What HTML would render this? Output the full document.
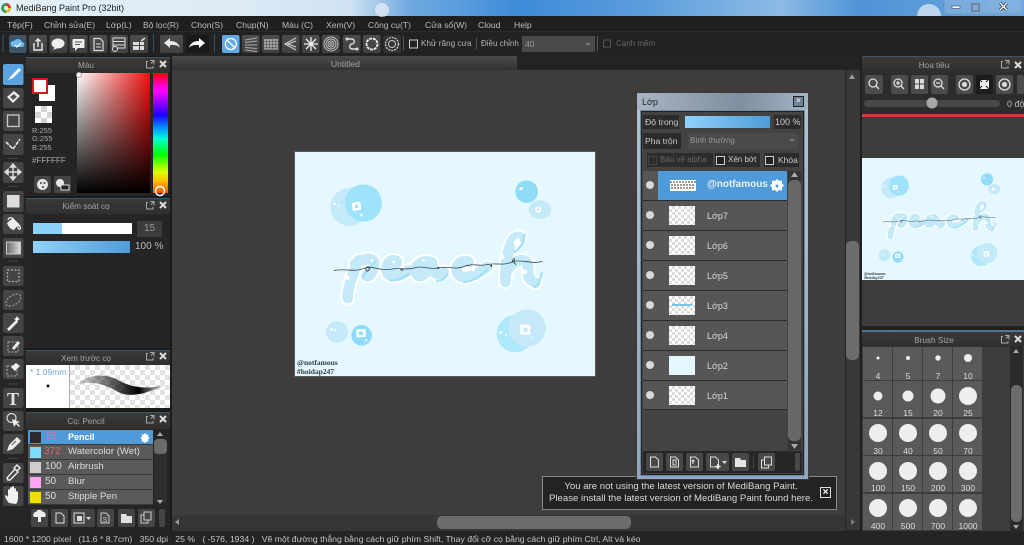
<!DOCTYPE html>
<html><head><meta charset="utf-8"><title>MediBang Paint Pro</title>
<style>
html,body{margin:0;padding:0;background:#3f3d3c}
#r{position:relative;width:1024px;height:545px;overflow:hidden;background:#3f3d3c;font-family:"Liberation Sans",sans-serif;font-size:10px;color:#bdbdbd;filter:blur(.35px)}
#r div{position:absolute;box-sizing:border-box}
.t{white-space:pre;line-height:12px}
.m{top:19px;font-size:8.6px}
.h{background:linear-gradient(#3c3a39,#302f2e);border-top:1px solid #3e5566;text-align:center;color:#a5a5a5;font-size:8.2px;line-height:15px}
.p{background:#252525}
.row{background:#5a5a5a;border-bottom:1px solid #3a3a3a}
.lr{left:643px;width:144px;height:30px;background:#565656;border-bottom:1px solid #2c2c2c}
.th{left:669px;width:26px;height:19px;background:repeating-conic-gradient(#dcdcdc 0 25%,#fff 0 50%) 0 0/6px 6px}
.rd{left:646px;width:8px;height:8px;border-radius:50%;background:#d8d8d8}
.nm{left:707px;color:#d8d8d8;font-size:9px}
.cb{width:9px;height:9px;border:1px solid #cfcfcf;background:#222}
#r .lb{font-size:8.5px;color:#ddd;text-align:center;width:30px;z-index:2;line-height:12px}
.br{font-size:9.6px;color:#ddd}
svg{position:absolute;left:0;top:0}
</style></head><body><div id="r">

<div style="left:0;top:0;width:1024px;height:16px;background:linear-gradient(90deg,#e4f0f8 0,#dbeaf5 250px,#cfe2f2 350px,#6fa9e0 410px,#3f8bd8 520px,#5a9cdc 640px,#8cbbe5 780px,#4f93d6 860px,#6ea6de 1024px)"></div>
<div class="t" style="left:16px;top:2px;color:#222;font-size:9px">MediBang Paint Pro (32bit)</div>

<div style="left:0;top:16px;width:1024px;height:16px;background:#1f1f1f;border-bottom:1px solid #2c2c2c"></div>
<div class="t m" style="left:7px">Tệp(F)</div>
<div class="t m" style="left:44px">Chỉnh sửa(E)</div>
<div class="t m" style="left:106px">Lớp(L)</div>
<div class="t m" style="left:143px">Bộ lọc(R)</div>
<div class="t m" style="left:191px">Chọn(S)</div>
<div class="t m" style="left:236px">Chụp(N)</div>
<div class="t m" style="left:282px">Màu (C)</div>
<div class="t m" style="left:326px">Xem(V)</div>
<div class="t m" style="left:368px">Công cụ(T)</div>
<div class="t m" style="left:425px">Cửa sổ(W)</div>
<div class="t m" style="left:478px">Cloud</div>
<div class="t m" style="left:514px">Help</div>

<div style="left:0;top:32px;width:1024px;height:23px;background:#222"></div>
<div class="t" style="left:421px;top:38px;font-size:8.2px;color:#b5b5b5">Khử răng cưa</div>
<div class="t" style="left:481px;top:38px;font-size:8px;color:#b5b5b5">Điều chỉnh</div>
<div style="left:522px;top:36px;width:73px;height:16px;background:#4a4a4a"></div>
<div class="t" style="left:525px;top:38px;font-size:8.5px;color:#9a9a9a">40</div>
<div class="t" style="left:616px;top:38px;font-size:8px;color:#666">Cạnh mềm</div>

<div style="left:0;top:55px;width:1024px;height:15px;background:#232323"></div>
<div style="left:172px;top:56px;width:345px;height:14px;background:linear-gradient(#4d4b4a,#333231)"></div>
<div class="t" style="left:331px;top:58px;font-size:8.5px;color:#a5a5a5">Untitled</div>
<div style="left:0;top:55px;width:26px;height:476px;background:#262626"></div>

<div style="left:26px;top:56px;width:146px;height:475px;background:#1b1b1b"></div>
<div class="h" style="left:26px;top:57px;width:144px;height:16px;padding-right:24px">Màu</div>
<div class="p" style="left:26px;top:73px;width:144px;height:123px"></div>
<div style="left:77px;top:73px;width:73px;height:120px;background:linear-gradient(transparent,#000),linear-gradient(90deg,#fff,#f01010)"></div>
<div style="left:153px;top:73px;width:15px;height:120px;background:linear-gradient(#f00000 0,#ff00c8 10%,#ff00ff 15%,#2000ff 35%,#00a0ff 47%,#00ffd0 55%,#00ff00 68%,#d8ff00 82%,#ffc000 90%,#ff5000 100%)"></div>
<div style="left:39px;top:85px;width:16px;height:16px;background:#fff"></div>
<div style="left:32px;top:78px;width:16px;height:16px;background:#fff;border:2px solid #d81818"></div>
<div style="left:35px;top:106px;width:17px;height:17px;background:repeating-conic-gradient(#d4d4d4 0 25%,#fff 0 50%) 0 0/12px 12px"></div>
<div class="t" style="left:32px;top:127px;font-size:7.5px;line-height:8.3px;color:#aaa">R:255
G:255
B:255</div>
<div class="t" style="left:32px;top:155px;font-size:8px;color:#aaa">#FFFFFF</div>

<div class="h" style="left:26px;top:198px;width:144px;height:16px;padding-right:24px">Kiểm soát cọ</div>
<div class="p" style="left:26px;top:214px;width:144px;height:134px"></div>
<div style="left:33px;top:223px;width:99px;height:11px;background:linear-gradient(90deg,#8dd0fb 0,#8dd0fb 29px,#fff 29px)"></div>
<div style="left:137px;top:221px;width:25px;height:16px;background:#3c3c3c;color:#999;text-align:center;font-size:10px;line-height:16px">15</div>
<div style="left:33px;top:241px;width:97px;height:12px;background:linear-gradient(90deg,#90d2fb,#4f9cd8)"></div>
<div class="t" style="left:135px;top:241px;font-size:10px;color:#bbb">100 %</div>

<div class="h" style="left:26px;top:350px;width:144px;height:15px;padding-right:24px">Xem trước cọ</div>
<div style="left:26px;top:365px;width:44px;height:43px;background:#fff;border-right:1px solid #aaa"></div>
<div style="left:70px;top:365px;width:100px;height:43px;background:repeating-conic-gradient(#e2e2e2 0 25%,#fff 0 50%) 0 0/10px 10px"></div>
<div class="t" style="left:30px;top:366px;font-size:8.5px;color:#6aa3cf">* 1.09mm</div>

<div class="h" style="left:26px;top:412px;width:144px;height:17px;line-height:17px;padding-right:24px">Cọ: Pencil</div>
<div class="p" style="left:26px;top:429px;width:144px;height:102px"></div>
<div class="row" style="left:28px;top:430px;width:125px;height:15px;background:#4f9bd9"></div>
<div class="row" style="left:28px;top:445px;width:125px;height:15px"></div>
<div class="row" style="left:28px;top:460px;width:125px;height:15px"></div>
<div class="row" style="left:28px;top:475px;width:125px;height:15px"></div>
<div class="row" style="left:28px;top:490px;width:125px;height:15px"></div>
<div style="left:30px;top:432px;width:11px;height:11px;background:#2a2a2e"></div>
<div style="left:30px;top:447px;width:11px;height:11px;background:#7fdcff"></div>
<div style="left:30px;top:462px;width:11px;height:11px;background:#d0ccd0"></div>
<div style="left:30px;top:477px;width:11px;height:11px;background:#ffa4f4"></div>
<div style="left:30px;top:492px;width:11px;height:11px;background:#f0e000"></div>
<div class="t" style="left:45px;top:431px;font-size:10px;color:#d87a9a">15</div>
<div class="t" style="left:44px;top:446px;font-size:10px;color:#d86a6a">372</div>
<div class="t" style="left:45px;top:461px;font-size:10px;color:#ddd">100</div>
<div class="t" style="left:45px;top:476px;font-size:10px;color:#ddd">50</div>
<div class="t" style="left:45px;top:491px;font-size:10px;color:#ddd">50</div>
<div class="t" style="left:68px;top:431px;font-size:9px;color:#fff;font-weight:bold">Pencil</div>
<div class="t br" style="left:68px;top:446px">Watercolor (Wet)</div>
<div class="t br" style="left:68px;top:461px">Airbrush</div>
<div class="t br" style="left:68px;top:476px">Blur</div>
<div class="t br" style="left:68px;top:491px">Stipple Pen</div>
<div style="left:154px;top:438px;width:13px;height:66px;background:#2e2e2e;border-radius:5px"></div>
<div style="left:154px;top:439px;width:13px;height:15px;background:#6a6a6a;border-radius:4px"></div>

<div style="left:845px;top:70px;width:17px;height:461px;background:#252525"></div>
<div style="left:846px;top:70px;width:14px;height:460px;background:#3a3837"></div>
<div style="left:846px;top:241px;width:13px;height:119px;background:#6e6c6b;border-radius:5px"></div>
<div style="left:172px;top:515px;width:673px;height:16px;background:#383635"></div>
<div style="left:437px;top:516px;width:194px;height:13px;background:#6e6c6b;border-radius:5px"></div>

<div style="left:295px;top:152px;width:300px;height:224px;background:#e6f8ff;box-shadow:0 0 0 1px #5a5a5a"></div>

<div style="left:862px;top:56px;width:162px;height:475px;background:#3f3d3c"></div>
<div style="left:860px;top:56px;width:2px;height:475px;background:#1f1f1f"></div>
<div class="h" style="left:862px;top:56px;width:162px;height:17px;line-height:17px;padding-right:18px">Hoa tiêu</div>
<div style="left:862px;top:73px;width:162px;height:41px;background:#2c2c2c"></div>
<div style="left:864px;top:100px;width:136px;height:7px;background:#484848;border-radius:4px"></div>
<div class="t" style="left:1007px;top:98px;font-size:9px;color:#bbb">0 độ</div>
<div style="left:862px;top:114px;width:162px;height:3px;background:#c8403a"></div>
<div style="left:862px;top:158px;width:162px;height:122px;background:#e6f8ff"></div>
<div style="left:862px;top:326px;width:162px;height:5px;background:#1f1f1f"></div>

<div class="h" style="left:862px;top:330px;width:162px;height:17px;line-height:17px;padding-right:18px;border-top:2px solid #4a7896">Brush Size</div>
<div style="left:1010px;top:347px;width:13px;height:184px;background:#2a2a2a"></div>
<div style="left:1011px;top:385px;width:11px;height:137px;background:#6e6c6b;border-radius:5px"></div>

<div class="lb" style="left:863px;top:370px">4</div><div class="lb" style="left:893px;top:370px">5</div><div class="lb" style="left:923px;top:370px">7</div><div class="lb" style="left:953px;top:370px">10</div>
<div class="lb" style="left:863px;top:407px">12</div><div class="lb" style="left:893px;top:407px">15</div><div class="lb" style="left:923px;top:407px">20</div><div class="lb" style="left:953px;top:407px">25</div>
<div class="lb" style="left:863px;top:445px">30</div><div class="lb" style="left:893px;top:445px">40</div><div class="lb" style="left:923px;top:445px">50</div><div class="lb" style="left:953px;top:445px">70</div>
<div class="lb" style="left:863px;top:482px">100</div><div class="lb" style="left:893px;top:482px">150</div><div class="lb" style="left:923px;top:482px">200</div><div class="lb" style="left:953px;top:482px">300</div>
<div class="lb" style="left:863px;top:520px">400</div><div class="lb" style="left:893px;top:520px">500</div><div class="lb" style="left:923px;top:520px">700</div><div class="lb" style="left:953px;top:520px">1000</div>

<div style="left:0;top:531px;width:1024px;height:14px;background:#242424"></div>
<div class="t" style="left:4px;top:533px;font-size:8.7px;color:#c4c4c4">1600 * 1200 pixel   (11.6 * 8.7cm)   350 dpi   25 %   ( -576, 1934 )   Vẽ một đường thẳng bằng cách giữ phím Shift, Thay đổi cỡ cọ bằng cách giữ phím Ctrl, Alt và kéo</div>

<div style="left:542px;top:476px;width:295px;height:34px;background:#232323;border:1px solid #8a8a8a"></div>
<div class="t" style="left:545px;top:481px;width:272px;text-align:center;font-size:9.6px;color:#d8d8d8">You are not using the latest version of MediBang Paint.
Please install the latest version of MediBang Paint found here.</div>
<div style="left:820px;top:487px;width:11px;height:11px;background:#222;border:1px solid #ddd;color:#fff;font-size:10px;font-weight:bold;line-height:9px;text-align:center">×</div>

<div style="left:636px;top:92px;width:173px;height:388px;background:linear-gradient(#b4c2d0,#8ea6c0);border:1px solid #3a3a3a"></div>
<div style="left:637px;top:93px;width:171px;height:17px;background:linear-gradient(90deg,#a9b5c2,#7f8f9f 60%,#a3b4c4)"></div>
<div class="t" style="left:642px;top:96px;font-size:9px;color:#222">Lớp</div>
<div style="left:793px;top:96px;width:11px;height:11px;background:#6f8396;border:1px solid #222;color:#fff;font-size:8px;line-height:8px;text-align:center">×</div>
<div style="left:640px;top:110px;width:165px;height:366px;background:#6e8ba8"></div>
<div style="left:641px;top:111px;width:163px;height:364px;background:#454342;border:1px solid #222"></div>
<div style="left:643px;top:115px;width:36px;height:14px;background:#2c2c2c"></div>
<div class="t" style="left:645px;top:116px;font-size:8.7px;color:#c8c8c8">Độ trong</div>
<div style="left:685px;top:116px;width:85px;height:12px;background:linear-gradient(90deg,#8fd2fb,#4f9cd8)"></div>
<div style="left:774px;top:115px;width:27px;height:14px;background:#2c2c2c"></div>
<div class="t" style="left:775px;top:116px;font-size:9px;color:#ccc">100 %</div>
<div style="left:643px;top:133px;width:38px;height:16px;background:#2c2a2a"></div>
<div class="t" style="left:645px;top:135px;font-size:8.6px;color:#c8c8c8">Pha trộn</div>
<div style="left:688px;top:133px;width:110px;height:16px;background:#4c4a49"></div>
<div class="t" style="left:690px;top:135px;font-size:8px;color:#999">Bình thường</div>
<div style="left:647px;top:153px;width:66px;height:14px;background:#2c2c2c"></div>
<div style="left:715px;top:153px;width:45px;height:14px;background:#2c2c2c"></div>
<div style="left:764px;top:153px;width:35px;height:14px;background:#2c2c2c"></div>
<div class="cb" style="left:648px;top:156px;border-color:#444;background:#2c2c2c"></div>
<div class="cb" style="left:716px;top:156px"></div>
<div class="cb" style="left:765px;top:156px"></div>
<div class="t" style="left:660px;top:154px;font-size:8px;color:#666">Bảo vệ alpha</div>
<div class="t" style="left:728px;top:154px;font-size:8px;color:#ccc">Xén bớt</div>
<div class="t" style="left:778px;top:154px;font-size:8.5px;color:#ccc">Khóa</div>

<div class="lr" style="top:171px"></div><div style="left:658px;top:171px;width:129px;height:29px;background:#4f9bd9"></div>
<div class="lr" style="top:201px"></div><div class="lr" style="top:231px"></div><div class="lr" style="top:261px"></div>
<div class="lr" style="top:291px"></div><div class="lr" style="top:321px"></div><div class="lr" style="top:351px"></div><div class="lr" style="top:381px;height:29px"></div>
<div class="rd" style="top:181px"></div><div class="rd" style="top:211px"></div><div class="rd" style="top:241px"></div><div class="rd" style="top:271px"></div><div class="rd" style="top:301px"></div><div class="rd" style="top:331px"></div><div class="rd" style="top:361px"></div><div class="rd" style="top:391px"></div>
<div class="th" style="top:206px"></div><div class="th" style="top:236px"></div><div class="th" style="top:266px"></div><div class="th" style="top:296px"></div><div class="th" style="top:326px"></div><div class="th" style="top:356px;background:#e6f8ff"></div><div class="th" style="top:386px"></div>
<div class="t" style="left:707px;top:179px;font-size:10px;font-weight:bold;color:#e8f2fa">@notfamous</div>
<div class="t nm" style="top:210px">Lớp7</div>
<div class="t nm" style="top:240px">Lớp6</div>
<div class="t nm" style="top:270px">Lớp5</div>
<div class="t nm" style="top:300px">Lớp3</div>
<div class="t nm" style="top:330px">Lớp4</div>
<div class="t nm" style="top:360px">Lớp2</div>
<div class="t nm" style="top:390px">Lớp1</div>
<div style="left:788px;top:171px;width:13px;height:279px;background:#333"></div>
<div style="left:788px;top:180px;width:13px;height:261px;background:#6a6867;border-radius:5px"></div>
<div style="left:643px;top:451px;width:159px;height:22px;background:#262626"></div>

<svg width="1024" height="545" viewBox="0 0 1024 545">
<defs>
<symbol id="art" viewBox="0 0 300 224" overflow="visible">
<g transform="translate(-4.67,-6.67) scale(.3333)">
<circle cx="177" cy="185" r="57" fill="#c4eafa"/><circle cx="219" cy="173" r="56" fill="#9fe3fb"/>
<rect x="186" y="171" width="26" height="24" rx="3" fill="#fff" transform="rotate(-10 199 183)"/><rect x="194" y="178" width="10" height="10" fill="#9fe3fb"/>
<circle cx="133" cy="175" r="4" fill="#fff"/><circle cx="146" cy="180" r="3" fill="#fff"/><circle cx="213" cy="209" r="4" fill="#fff"/>
<circle cx="709" cy="139" r="34" fill="#8fdcf9"/><circle cx="692" cy="130" r="5" fill="#fff"/><ellipse cx="749" cy="193" rx="34" ry="28" fill="#c4eafa"/><circle cx="744" cy="193" r="9" fill="#fff"/><circle cx="744" cy="193" r="4" fill="#c4eafa"/>
<circle cx="140" cy="560" r="33" fill="#c4eafa"/><circle cx="124" cy="552" r="4" fill="#fff"/><circle cx="134" cy="555" r="3" fill="#fff"/>
<circle cx="214" cy="570" r="31" fill="#8fdcf9"/><rect x="198" y="552" width="28" height="24" rx="3" fill="#fff"/><rect x="206" y="559" width="12" height="10" fill="#8fdcf9"/><circle cx="228" cy="584" r="3" fill="#fff"/>
<circle cx="675" cy="565" r="56" fill="#aee8fb"/><circle cx="710" cy="548" r="56" fill="#c4eafa"/>
<rect x="690" y="538" width="30" height="30" rx="3" fill="#fff"/><rect x="699" y="547" width="13" height="12" fill="#c4eafa"/><circle cx="631" cy="562" r="4" fill="#fff"/><circle cx="647" cy="568" r="3" fill="#fff"/><circle cx="725" cy="577" r="3" fill="#fff"/>
<g fill="none" stroke-linecap="round" stroke-linejoin="round">
<g stroke="#fff" stroke-width="44">
<path d="M205 345C188 385 172 425 172 458"/><path d="M195 355C235 330 262 340 248 372C240 395 228 395 228 390"/>
<path d="M290 372C315 365 330 345 310 345C285 345 280 390 305 392C325 394 340 385 355 375"/>
<path d="M420 350C390 340 365 370 382 390C395 400 415 375 425 352C424 375 432 395 460 380"/>
<path d="M535 350C505 338 485 375 510 393C530 402 555 390 590 365"/>
<path d="M688 275C655 270 645 350 645 410M645 385C670 340 705 335 712 358C718 385 705 400 735 412"/>
</g>
<g stroke="#c4e9f8" stroke-width="32">
<path d="M205 345C188 385 172 425 172 458"/><path d="M195 355C235 330 262 340 248 372C240 395 228 395 228 390"/>
<path d="M290 372C315 365 330 345 310 345C285 345 280 390 305 392C325 394 340 385 355 375"/>
<path d="M420 350C390 340 365 370 382 390C395 400 415 375 425 352C424 375 432 395 460 380"/>
<path d="M535 350C505 338 485 375 510 393C530 402 555 390 590 365"/>
<path d="M688 275C655 270 645 350 645 410M645 385C670 340 705 335 712 358C718 385 705 400 735 412"/>
</g>
<path d="M218 398C225 378 245 360 255 350M300 405C320 408 345 395 355 385M440 405C455 408 465 398 472 388M520 410C545 410 575 390 590 372M703 268C702 290 690 310 672 320M733 425C748 415 752 398 754 382" stroke="#9fdff7" stroke-width="6"/>
</g>
<g fill="#fff"><circle cx="172" cy="398" r="6"/><circle cx="310" cy="350" r="4"/><circle cx="400" cy="345" r="4"/><circle cx="548" cy="372" r="6"/><circle cx="637" cy="335" r="6"/><circle cx="703" cy="380" r="7"/><ellipse cx="680" cy="290" rx="8" ry="14" transform="rotate(30 680 290)"/><circle cx="245" cy="345" r="4"/><circle cx="480" cy="320" r="3"/></g>
<path d="M130 376C160 368 190 382 222 369C248 360 272 378 300 372C325 366 345 376 375 367C400 360 415 374 445 368C475 362 495 374 520 364C545 352 565 364 590 358C620 352 640 362 665 350C690 340 725 358 757 348" fill="none" stroke="#1f2a30" stroke-width="2"/>
<path d="M226 372c6-12 14-8 10 2c-3 6-9 4-10-2M330 374c6-8 10-2 4 3M440 368c6-6 8 0 4 2M600 362c4-6 6 0 2 3M665 352c4-16 10-16 6 0l6 6" fill="none" stroke="#1f2a30" stroke-width="2.4"/>
</g>
</symbol>
<linearGradient id="st" x1="0" x2="1"><stop offset="0" stop-color="#000" stop-opacity=".12"/><stop offset=".35" stop-color="#000" stop-opacity=".55"/><stop offset=".7" stop-color="#000"/><stop offset="1" stop-color="#000" stop-opacity=".1"/></linearGradient>
<linearGradient id="btn" x1="0" y1="0" x2="0" y2="1"><stop offset="0" stop-color="#4c4c4c"/><stop offset="1" stop-color="#404040"/></linearGradient>
<linearGradient id="sq" x1="0" x2="1"><stop offset="0" stop-color="#666"/><stop offset="1" stop-color="#ddd"/></linearGradient>
</defs>

<!-- title icon and controls -->
<circle cx="6" cy="8" r="5" fill="#2ea060"/><path d="M6 3a5 5 0 0 1 5 5H6z" fill="#e03a3a"/><path d="M6 8h5a5 5 0 0 1-5 5z" fill="#e8c020"/><circle cx="6" cy="8" r="2" fill="#fff"/>
<path d="M917 16a12 12 0 0 1 24 0z" fill="#dbe8f2" fill-opacity=".75"/>
<circle cx="382" cy="10" r="7" fill="#e8f0f6" fill-opacity=".7"/>
<g fill="none" stroke="#7fa9d0"><rect x="945" y="-1" width="22" height="14" rx="2" fill="#9fc4e6" fill-opacity=".4"/><rect x="967" y="-1" width="19" height="14" fill="#9fc4e6" fill-opacity=".4"/><rect x="986" y="-1" width="35" height="14" rx="2" fill="#9fc4e6" fill-opacity=".4"/></g>
<rect x="952" y="6" width="8" height="2.5" fill="#fff" stroke="#345" stroke-width=".6"/>
<rect x="972" y="4" width="7" height="7" fill="none" stroke="#234" stroke-width="1.6"/><rect x="972" y="4" width="7" height="7" fill="none" stroke="#eef" stroke-width=".6"/>
<path d="M1000 3l7 7m0-7l-7 7" stroke="#234" stroke-width="3"/><path d="M1000 3l7 7m0-7l-7 7" stroke="#fff" stroke-width="1.4"/>

<!-- toolbar -->
<g stroke="#32526a" stroke-width="1"><path d="M3 34v18M153.500 34v18M214.500 34v18"/></g>
<path d="M403.500 36v15M476.500 38v11M597.500 36v15" stroke="#555"/>
<g fill="url(#btn)">
<rect x="9" y="35" width="17.500" height="18" rx="2" fill="#3e5468"/><rect x="29" y="35" width="18" height="18" rx="2"/><rect x="49.500" y="35" width="18" height="18" rx="2"/><rect x="69.500" y="35" width="18" height="18" rx="2"/><rect x="89.500" y="35" width="18" height="18" rx="2"/><rect x="110" y="35" width="18" height="18" rx="2"/><rect x="130" y="35" width="18" height="18" rx="2"/>
<rect x="160" y="35" width="23" height="18" rx="2"/><rect x="186" y="35" width="23" height="18" rx="2" fill="#1a1a1a"/>
<rect x="222" y="35" width="17.500" height="18" rx="2" fill="#5fa9e6"/><rect x="242" y="35" width="17.500" height="18" rx="2"/><rect x="262" y="35" width="17.500" height="18" rx="2"/><rect x="282" y="35" width="17.500" height="18" rx="2"/><rect x="302" y="35" width="17.500" height="18" rx="2"/><rect x="322" y="35" width="17.500" height="18" rx="2"/><rect x="343" y="35" width="17.500" height="18" rx="2"/><rect x="363" y="35" width="17.500" height="18" rx="2"/><rect x="383.500" y="35" width="17.500" height="18" rx="2" fill="#333"/>
</g>
<path d="M13 47a3 3 0 0 1 1-6a4.500 4.500 0 0 1 8 1a2.500 2.500 0 0 1 0 5z" fill="#6db8ef"/><path d="M15 45l2 2 4-4" stroke="#fff" fill="none" stroke-width="1.200"/>
<path d="M34 43v7h8v-7M38 47v-8m-2.500 2.500L38 39l2.500 2.500" fill="none" stroke="#eee" stroke-width="1.400"/>
<ellipse cx="58" cy="43.500" rx="6.500" ry="5" fill="#eee"/><path d="M55 47l-2 3 5-2z" fill="#eee"/>
<rect x="72.500" y="39" width="12" height="9" rx="1" fill="#eee"/><path d="M75 42h7M75 44.500h5" stroke="#555"/><path d="M75 48v3l3-3z" fill="#eee"/>
<path d="M94 38.500h6l3 3v9h-9z" fill="none" stroke="#ddd" stroke-width="1.200"/><path d="M96 44h5M96 47h5" stroke="#ddd"/>
<rect x="113" y="38" width="12" height="10" fill="none" stroke="#ddd"/><path d="M113 41.500h12M113 45h12" stroke="#ddd"/><circle cx="115" cy="49" r="2.500" fill="#444" stroke="#ddd"/>
<path d="M133 42h6v3h-6zM140 42h4v3h-4zM133 46h6v4h-6zM140 46h4v4h-4z" fill="#ddd"/><path d="M141 41l4-3" stroke="#ddd" stroke-width="1.500"/>
<path d="M164 43l6-5v3c5 0 9 2 10 7c-2-3-5-3-10-3v3z" fill="#e8e8e8"/>
<path d="M205 43l-6-5v3c-5 0-9 2-10 7c2-3 5-3 10-3v3z" fill="#fff"/>
<circle cx="230.800" cy="44" r="5.500" fill="none" stroke="#fff" stroke-width="1.300"/><path d="M227 40l8 8" stroke="#fff" stroke-width="1.300"/>
<path d="M245 40l12-2M245 42.500l12-1.500M245 45h12M245 47.500l12 1M245 50l12 1.500" stroke="#aaa" stroke-width="1.100"/>
<path d="M265 39v10M268 39v10M271 39v10M274 39v10M277 39v10M264 40h14M264 43h14M264 46h14M264 49h14" stroke="#bbb"/>
<path d="M296 38L285 44l11 6M296 41l-8 3 8 3" fill="none" stroke="#ccc" stroke-width="1.200"/>
<path d="M311 37v14M304 44h14M306 39l10 10M316 39l-10 10" stroke="#eee" stroke-width="1.300"/>
<g fill="none" stroke="#bbb"><circle cx="331" cy="44" r="7"/><circle cx="331" cy="44" r="5"/><circle cx="331" cy="44" r="3"/><circle cx="331" cy="44" r="1.200"/></g>
<path d="M347 39h5c3 0 3 5 0 5s-3 5 0 5h5" fill="none" stroke="#ddd" stroke-width="1.400"/><circle cx="347" cy="39" r="1.500" fill="#ddd"/><circle cx="357" cy="49" r="1.500" fill="#ddd"/>
<circle cx="372" cy="44" r="5.500" fill="none" stroke="#eee" stroke-width="1.800" stroke-dasharray="3 .8"/>
<circle cx="392" cy="44" r="6.500" fill="none" stroke="#ccc" stroke-width="1.300" stroke-dasharray="2 1"/><circle cx="392" cy="44" r="3.500" fill="none" stroke="#ccc"/>
<rect x="409.500" y="40" width="8" height="8" fill="none" stroke="#ccc"/>
<rect x="603.500" y="40" width="7" height="7" fill="none" stroke="#555"/>
<path d="M585 43h6l-3 3z" fill="#777"/>

<!-- left tools -->
<g fill="#454545">
<rect x="3" y="64" width="20.500" height="21" rx="2" fill="#5aa3e0"/><rect x="3" y="88" width="20.500" height="20" rx="2"/><rect x="3" y="111" width="20.500" height="20" rx="2"/><rect x="3" y="134" width="20.500" height="21" rx="2"/><rect x="3" y="162" width="20.500" height="21" rx="2"/><rect x="3" y="191" width="20.500" height="21" rx="2"/><rect x="3" y="214" width="20.500" height="20" rx="2"/><rect x="3" y="238" width="20.500" height="20" rx="2"/><rect x="3" y="266" width="20.500" height="20" rx="2"/><rect x="3" y="290" width="20.500" height="20" rx="2"/><rect x="3" y="313" width="20.500" height="20" rx="2"/><rect x="3" y="336" width="20.500" height="20" rx="2"/><rect x="3" y="359" width="20.500" height="20" rx="2"/><rect x="3" y="388" width="20.500" height="20" rx="2"/><rect x="3" y="411" width="20.500" height="20" rx="2"/><rect x="3" y="434" width="20.500" height="20" rx="2"/><rect x="3" y="463" width="20.500" height="20" rx="2"/><rect x="3" y="486" width="20.500" height="20" rx="2"/>
</g>
<path d="M8 158.500h10M8 186.500h10M8 261h10M8 384h10M8 458.500h10" stroke="#444"/>
<path d="M8 80l3-4 8-8 2 2-8 8z" fill="#fff"/>
<path d="M7 97l7-6 6 5-7 7z" fill="#eee"/><path d="M10 97l4-3 3 3-4 3z" fill="#555"/>
<rect x="7.500" y="115" width="11.500" height="11.500" fill="none" stroke="#ccc" stroke-width="1.300"/>
<path d="M6 142l3 3 4 4 7-10" fill="none" stroke="#eee" stroke-width="1.500" stroke-dasharray="4 1"/>
<path d="M13 164v16M5 172h16M13 164l-2.500 3h5zM13 180l-2.500-3h5zM5 172l3-2.500v5zM21 172l-3-2.500v5z" stroke="#ddd" fill="#ddd" stroke-width="1.400"/>
<rect x="7" y="195" width="12.500" height="12.500" fill="#ddd"/>
<path d="M7 223l6-5 6 6-5 6c-3 0-6-4-7-7z" fill="#eee"/><path d="M18 224c2 2 3 4 2 5s-3-1-2-5zM8 220c1-3 4-3 5-1" fill="none" stroke="#eee" stroke-width="1.300"/>
<rect x="6.500" y="242" width="14" height="12" fill="url(#sq)" stroke="#ccc"/>
<rect x="7.500" y="270" width="11.500" height="11.500" fill="none" stroke="#aaa" stroke-dasharray="2 1.500" stroke-width="1.200"/>
<path d="M6 303c0-5 7-9 11-9s4 3 3 6-6 6-10 6-4-1-4-3z" fill="none" stroke="#aaa" stroke-dasharray="2 1.500"/>
<path d="M7 329l9-9 2 2-9 9z" fill="#eee"/><path d="M17 316l1 2 2 1-2 1-1 2-1-2-2-1 2-1z" fill="#fff"/>
<rect x="8" y="342" width="10" height="10" fill="none" stroke="#aaa" stroke-dasharray="2 1.500"/><path d="M12 348l6-7 2 2-6 7z" fill="#eee"/>
<rect x="7" y="366" width="10" height="10" fill="none" stroke="#aaa" stroke-dasharray="2 1.500"/><path d="M11 367l5-4 4 3-5 5z" fill="#eee"/>
<text x="13" y="405" text-anchor="middle" font-family="Liberation Serif,serif" font-weight="bold" font-size="18" fill="#e4e4e4">T</text>
<circle cx="11.500" cy="418" r="4.500" fill="none" stroke="#ddd" stroke-width="1.200"/><path d="M12 419l2 8 2-3 3 3 1-1-3-3 3-1z" fill="#eee"/>
<path d="M7 451l2-6 8-8 4 4-8 8z" fill="#eee"/><path d="M12 445l4-4" stroke="#555"/>
<path d="M8 480l-1-2 8-9 3 3-8 8zM14 468l3-3 3 3-3 3z" fill="none" stroke="#eee" stroke-width="1.400"/>
<path d="M9 503c-2-2-4-6-4-7s2-1 3 1v-7c0-1 2-1 2 0v-2c0-1 2-1 2 0v-1c0-1 2-1 2 0v2c0-1 2-1 2 0v3c0-1 2-1 2 0v6c0 3-1 5-2 6z" fill="#f0f0f0"/>

<!-- panel popout/close icons -->
<g fill="none" stroke="#a8a8a8"><path d="M148 61.500h-1.500v6.500h6.500v-2M150 60.500h4v4M154 60.500l-3 3"/><path d="M148 202.500h-1.500v6.500h6.500v-2M150 201.500h4v4M154 201.500l-3 3"/><path d="M148 353.500h-1.500v6.500h6.500v-2M150 352.500h4v4M154 352.500l-3 3"/><path d="M148 416.500h-1.500v6.500h6.500v-2M150 415.500h4v4M154 415.500l-3 3"/><path d="M1003 61.500h-1.500v6.500h6.500v-2M1005 60.500h4v4M1009 60.500l-3 3"/><path d="M1003 336.500h-1.500v6.500h6.500v-2M1005 335.500h4v4M1009 335.500l-3 3"/></g>
<path d="M160 61l6 6m0-6l-6 6M160 202l6 6m0-6l-6 6M160 353l6 6m0-6l-6 6M160 416l6 6m0-6l-6 6M1015 62l6 6m0-6l-6 6M1015 336l6 6m0-6l-6 6" stroke="#ddd" stroke-width="2"/>

<!-- color panel extras -->
<circle cx="79" cy="75" r="2.500" fill="none" stroke="#aaa"/>
<circle cx="160" cy="191" r="4.500" fill="none" stroke="#fff" stroke-width="1.500"/>
<rect x="34" y="176" width="17" height="17" rx="2" fill="#444"/><rect x="54" y="176" width="17" height="17" rx="2" fill="#444"/>
<circle cx="42.500" cy="184.500" r="5.500" fill="#e6e6e6"/><circle cx="41" cy="183" r="1" fill="#444"/><circle cx="44.500" cy="183" r="1" fill="#444"/><circle cx="43" cy="187" r="1" fill="#444"/>
<circle cx="60" cy="183" r="4" fill="#e6e6e6"/><rect x="61" y="185" width="8" height="5" fill="#222" stroke="#ddd"/>

<!-- brush preview -->
<circle cx="48" cy="386" r="1.500" fill="#111"/>
<path d="M77 385C88 374 105 373 118 380C130 387 145 390 165 385C150 392 132 399 118 392C105 384 90 380 77 385z" fill="url(#st)"/>

<!-- brush panel -->
<path d="M145 433l1.500 1.500h2l-.500 2 1.500 1.500-1.500 1.500.500 2h-2l-1.500 1.500-1.500-1.500h-2l.500-2-1.500-1.500 1.500-1.500-.500-2h2z" fill="#fff"/>
<path d="M160 432l-3 4h6zM157 500l3 4 3-4z" fill="#aaa"/>
<g fill="#454545"><rect x="31" y="509" width="17" height="18" rx="2"/><rect x="51" y="509" width="17" height="18" rx="2"/><rect x="71" y="509" width="24" height="18" rx="2"/><rect x="97" y="509" width="17" height="18" rx="2"/><rect x="118" y="509" width="17" height="18" rx="2"/><rect x="138" y="509" width="17" height="18" rx="2"/><rect x="159" y="509" width="6" height="18" rx="2"/></g>
<path d="M34 517a3 3 0 0 1 2-5a4 4 0 0 1 7 0a3 3 0 0 1 2 5h-4v5h-3v-5z" fill="#eee"/>
<path d="M56 513h5l3 3v7h-8z" fill="none" stroke="#ddd"/>
<rect x="74" y="513" width="10" height="10" fill="none" stroke="#ddd"/><rect x="77" y="516" width="5" height="5" fill="#ddd"/><path d="M86 517h5l-2.500 3z" fill="#ddd"/>
<path d="M101 513h5l3 3v7h-8z" fill="none" stroke="#ccc"/><text x="105" y="522" text-anchor="middle" font-size="7" fill="#ccc" font-family="Liberation Sans,sans-serif">S</text>
<path d="M121 514h5l1 2h5v7h-11z" fill="#e0e0e0"/>
<rect x="141" y="515" width="7" height="8" fill="none" stroke="#ccc"/><rect x="144" y="512" width="7" height="8" fill="#454545" stroke="#ccc"/>

<!-- canvas scroll arrows -->
<path d="M849 79l3-5 3 5z" fill="#999"/><path d="M175 522l4-3v6z" fill="#999"/><path d="M855 522l-4-3v6z" fill="#999" opacity=".7"/>

<!-- canvas -->
<use href="#art" x="295" y="152" width="300" height="224"/>
<text x="297" y="365" font-family="Liberation Serif,serif" font-weight="bold" font-size="7.5" fill="#2c3d4c">@notfamous</text>
<text x="297" y="374" font-family="Liberation Serif,serif" font-weight="bold" font-size="7.5" fill="#2c3d4c">#hoidap247</text>
<use href="#art" x="862" y="158" width="162" height="121"/>
<text x="864" y="275" font-family="Liberation Serif,serif" font-weight="bold" font-size="4" fill="#3a4a58">@notfamous</text>
<text x="864" y="279" font-family="Liberation Serif,serif" font-weight="bold" font-size="4" fill="#3a4a58">#hoidap247</text>

<!-- navigator buttons -->
<g fill="#4c4c4c"><rect x="865" y="75" width="18" height="19" rx="2"/><rect x="891" y="75" width="17" height="19" rx="2"/><rect x="911" y="75" width="17" height="19" rx="2"/><rect x="931" y="75" width="17" height="19" rx="2"/><rect x="956" y="75" width="17" height="19" rx="2"/><rect x="976" y="75" width="17" height="19" rx="2" fill="#1c1c1c"/><rect x="996" y="75" width="17" height="19" rx="2"/><rect x="1017" y="75" width="7" height="19" rx="2"/></g>
<g fill="none" stroke="#ddd" stroke-width="1.300">
<circle cx="873" cy="83" r="4"/><path d="M876 86l3 3"/><circle cx="898" cy="83" r="4"/><path d="M901 86l3 3M896 83h4M898 81v4"/>
<circle cx="938" cy="83" r="4"/><path d="M941 86l3 3M936 83h4"/>
<circle cx="964.500" cy="84.500" r="5.500"/><circle cx="1004.500" cy="84.500" r="5.500"/>
</g>
<rect x="915" y="79" width="9" height="10" fill="#ddd"/><path d="M919.500 79v10M915 84h9" stroke="#4c4c4c"/>
<circle cx="964.500" cy="84.500" r="2.500" fill="#ddd"/><circle cx="1004.500" cy="84.500" r="2.500" fill="#ddd"/>
<path d="M980 80h9v9h-9z" fill="#eee"/><path d="M979 79l3 3m7-3l-3 3m-7 7l3-3m7 3l-3-3" stroke="#1c1c1c"/>
<circle cx="932" cy="103" r="5.500" fill="#a8a8a8"/>

<!-- brush sizes -->
<g fill="#5a5a5a"><rect x="863" y="347" width="29" height="33"/><rect x="893" y="347" width="29" height="33"/><rect x="923" y="347" width="29" height="33"/><rect x="953" y="347" width="29" height="33"/>
<rect x="863" y="381" width="29" height="36"/><rect x="893" y="381" width="29" height="36"/><rect x="923" y="381" width="29" height="36"/><rect x="953" y="381" width="29" height="36"/>
<rect x="863" y="419" width="29" height="36"/><rect x="893" y="419" width="29" height="36"/><rect x="923" y="419" width="29" height="36"/><rect x="953" y="419" width="29" height="36"/>
<rect x="863" y="456" width="29" height="36"/><rect x="893" y="456" width="29" height="36"/><rect x="923" y="456" width="29" height="36"/><rect x="953" y="456" width="29" height="36"/>
<rect x="863" y="494" width="29" height="36"/><rect x="893" y="494" width="29" height="36"/><rect x="923" y="494" width="29" height="36"/><rect x="953" y="494" width="29" height="36"/></g>
<g fill="#eee"><circle cx="878" cy="358" r="1.500"/><circle cx="908" cy="358" r="2"/><circle cx="938" cy="358" r="2.700"/><circle cx="968" cy="358" r="4"/>
<circle cx="878" cy="396" r="4.500"/><circle cx="908" cy="396" r="5.500"/><circle cx="938" cy="396" r="7.500"/><circle cx="968" cy="396" r="9"/>
<circle cx="878" cy="433" r="9"/><circle cx="908" cy="433" r="9"/><circle cx="938" cy="433" r="9"/><circle cx="968" cy="433" r="9"/>
<circle cx="878" cy="471" r="9"/><circle cx="908" cy="471" r="9"/><circle cx="938" cy="471" r="9"/><circle cx="968" cy="471" r="9"/>
<circle cx="878" cy="508" r="9"/><circle cx="908" cy="508" r="9"/><circle cx="938" cy="508" r="9"/><circle cx="968" cy="508" r="9"/></g>
<path d="M1016 349l-3 4h6zM1013 525l3 4 3-4z" fill="#aaa"/>

<!-- layer panel icons -->
<path d="M789 139h6l-3 3z" fill="#777"/>
<rect x="670" y="180" width="26" height="11" fill="#fff"/><path d="M670 182h26M671 185h24M671 188h24" stroke="#333" stroke-dasharray="2 1"/>
<path d="M777 179l2 2 3-.500v3l2 2-2 2v3l-3-.500-2 2-2-2-3 .500v-3l-2-2 2-2v-3l3 .500z" fill="#fff"/><circle cx="777" cy="186" r="1.500" fill="#4f9bd9"/>
<path d="M672 305h20" stroke="#7cc4e6" stroke-width="2"/>
<path d="M672 213h2M686 218h3M690 210h2" stroke="#bfe8f8"/>
<path d="M791 177l3.500-5 3.500 5zM791 444l3.500 5 3.500-5z" fill="#aaa"/>
<g fill="#484848"><rect x="646" y="453" width="17" height="18" rx="2"/><rect x="666" y="453" width="17" height="18" rx="2"/><rect x="686" y="453" width="17" height="18" rx="2"/><rect x="706" y="453" width="23" height="18" rx="2"/><rect x="732" y="453" width="17" height="18" rx="2"/><rect x="758" y="453" width="17" height="18" rx="2"/><rect x="795" y="453" width="5" height="18" rx="2"/></g>
<g fill="none" stroke="#ddd"><path d="M650.500 457h5l3 3v7h-8z"/><path d="M670.500 457h5l3 3v7h-8z"/><path d="M690.500 457h5l3 3v7h-8z"/><path d="M710.500 457h5l3 3v7h-8z"/><rect x="761.500" y="460" width="7" height="8"/><rect x="764.500" y="457" width="7" height="8" fill="#484848"/></g>
<path d="M673 460h3v5h-3zM693 464v-4m-1.500 1.500L693 460l1.500 1.500" stroke="#ddd" fill="none"/>
<path d="M718 464v5m-2.500-2.500h5" stroke="#fff" stroke-width="1.500"/><path d="M722 461h5l-2.500 3z" fill="#ddd"/>
<path d="M735 458h5l1 2h5v7h-11z" fill="#e4e4e4"/>
<path d="M753.500 455v14" stroke="#444"/>
</svg>
</div></body></html>
